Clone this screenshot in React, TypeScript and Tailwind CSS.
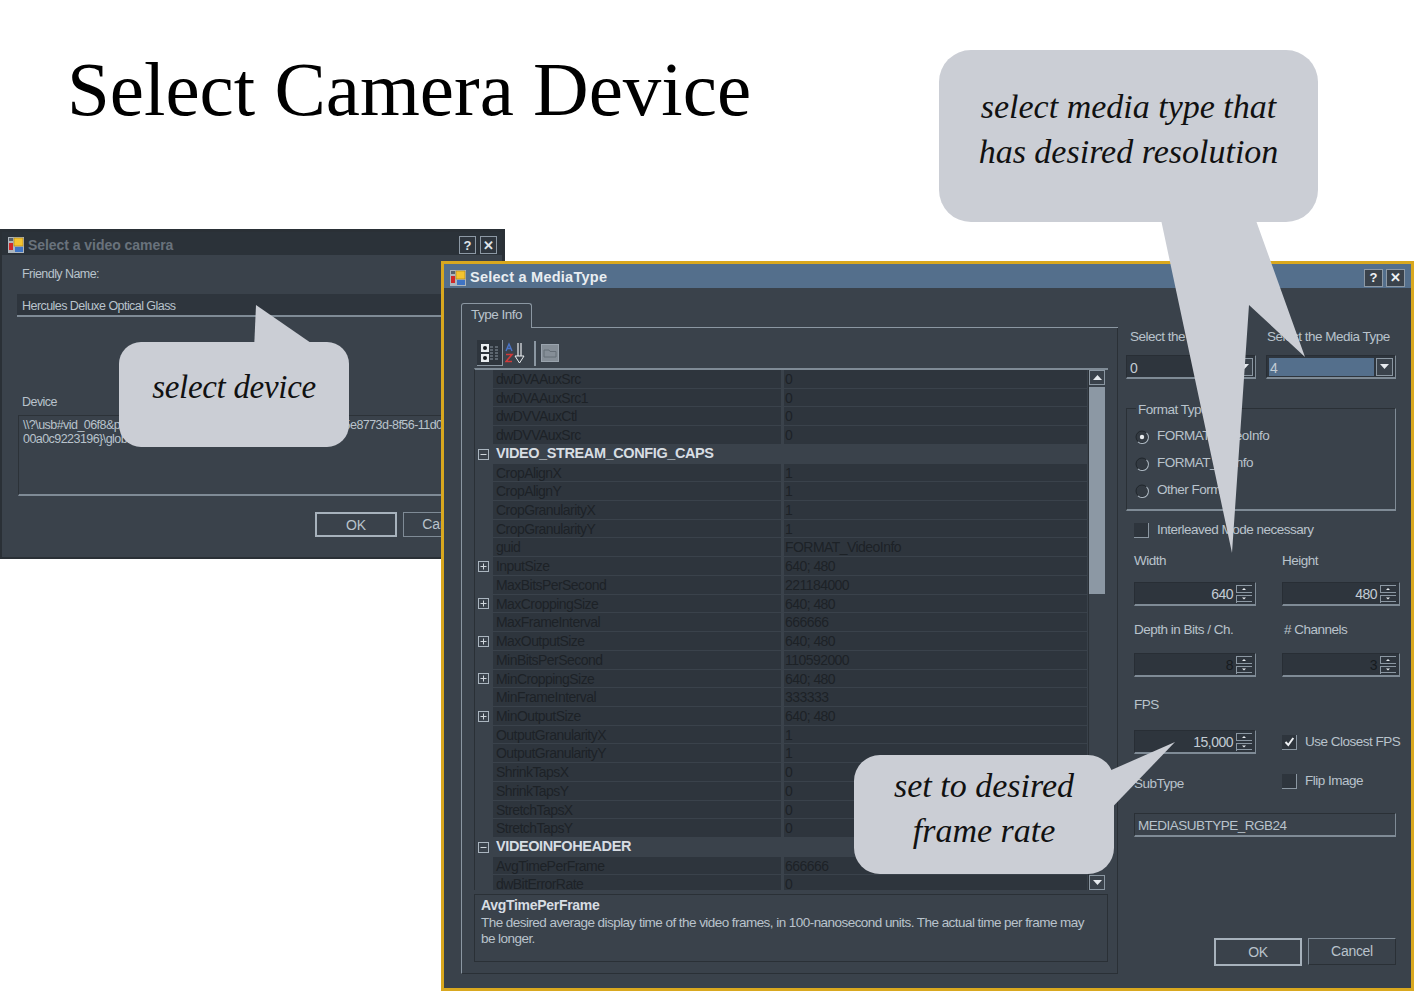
const rows: { name: string; value?: string; cat?: boolean; plus?: boolean; sel?: boolean }[] = [
  { name: "dwDVAAuxSrc", value: "0" },
  { name: "dwDVAAuxSrc1", value: "0" },
  { name: "dwDVVAuxCtl", value: "0" },
  { name: "dwDVVAuxSrc", value: "0" },
  { name: "VIDEO_STREAM_CONFIG_CAPS", cat: true },
  { name: "CropAlignX", value: "1" },
  { name: "CropAlignY", value: "1" },
  { name: "CropGranularityX", value: "1" },
  { name: "CropGranularityY", value: "1" },
  { name: "guid", value: "FORMAT_VideoInfo" },
  { name: "InputSize", value: "640; 480", plus: true },
  { name: "MaxBitsPerSecond", value: "221184000" },
  { name: "MaxCroppingSize", value: "640; 480", plus: true },
  { name: "MaxFrameInterval", value: "666666" },
  { name: "MaxOutputSize", value: "640; 480", plus: true },
  { name: "MinBitsPerSecond", value: "110592000" },
  { name: "MinCroppingSize", value: "640; 480", plus: true },
  { name: "MinFrameInterval", value: "333333" },
  { name: "MinOutputSize", value: "640; 480", plus: true },
  { name: "OutputGranularityX", value: "1" },
  { name: "OutputGranularityY", value: "1" },
  { name: "ShrinkTapsX", value: "0" },
  { name: "ShrinkTapsY", value: "0" },
  { name: "StretchTapsX", value: "0" },
  { name: "StretchTapsY", value: "0" },
  { name: "VIDEOINFOHEADER", cat: true },
  { name: "AvgTimePerFrame", value: "666666", sel: true },
  { name: "dwBitErrorRate", value: "0" },
];

function AppIcon() {
  return (
    <svg width="16" height="16" viewBox="0 0 16 16" className="shrink-0">
      <rect x="0" y="0" width="16" height="16" fill="#aeb6bd" />
      <rect x="6" y="1" width="9" height="8" fill="#f4c430" stroke="#a87d10" strokeWidth="0.6" />
      <rect x="1" y="6" width="4" height="7" fill="#d02828" />
      <rect x="7" y="10" width="8" height="5" fill="#3f74c4" />
      <rect x="1" y="1" width="4" height="3" fill="#59616b" />
    </svg>
  );
}

function TitleBtn({ children, dim }: { children: React.ReactNode; dim?: boolean }) {
  return (
    <div
      className={`h-[18px] flex items-center justify-center border border-[#8d99a5] text-[13px] font-bold leading-none ${
        dim ? "w-[17px] bg-[#2f363e] text-[#dfe4e9]" : "w-[19px] bg-[#3a424b] text-[#eef1f4]"
      }`}
    >
      {children}
    </div>
  );
}

function Spin({ value, dim, narrow }: { value: string; dim?: boolean; narrow?: boolean }) {
  return (
    <div
      className={`h-[24px] flex items-center bg-[#2e353d] border-t border-l border-[#282e35] border-b-2 border-r border-b-[#7f8b96] border-r-[#7f8b96] pr-[3px] ${
        narrow ? "w-[118px]" : "w-[122px]"
      }`}
    >
      <span className={`flex-1 text-right pt-[1px] pr-[3px] text-[14px] tracking-[-0.5px] ${dim ? "text-[#171b1f]" : "text-[#c3ccd4]"}`}>{value}</span>
      <svg width="16" height="18" viewBox="0 0 16 18" className="shrink-0">
        <path d="M0 .5h16M.5 0v8M0 7.5h16" stroke="#8b97a2" fill="none" />
        <path d="M0 10.5h16M.5 10v8M0 16.5h16" stroke="#8b97a2" fill="none" />
        <path d="M6 5h4L8 3z" fill="#e6eaee" />
        <path d="M6 12.5h4L8 14.5z" fill="#e6eaee" />
      </svg>
    </div>
  );
}

function Combo({ value, selected }: { value: string; selected?: boolean }) {
  return (
    <div className="w-[130px] h-[24px] flex items-center gap-[2px] bg-[#2e353d] border-t border-l border-[#282e35] border-b-2 border-r border-b-[#7f8b96] border-r-[#7f8b96] p-[2px]">
      <span className={`flex-1 h-[18px] pl-[1px] text-[14px] leading-[20px] text-[#c3ccd4] ${selected ? "bg-[#546f8c]" : ""}`}>{value}</span>
      <div className="w-[17px] h-[18px] flex items-center justify-center bg-[#3a424b] border border-[#8b97a2]">
        <svg width="9" height="5" viewBox="0 0 9 5"><path d="M0 0h9L4.5 5z" fill="#e6eaee" /></svg>
      </div>
    </div>
  );
}

function Radio({ label, on }: { label: string; on?: boolean }) {
  return (
    <div className="flex items-center gap-[8px] h-[27px] pl-[8px]">
      <svg width="14" height="14" viewBox="0 0 14 14" className="shrink-0">
        <circle cx="7" cy="7" r="6" fill="#333a42" stroke="#20262b" />
        <path d="M11.5 2.8A6 6 0 0 1 3 11.8" fill="none" stroke="#aab5bf" strokeWidth="1.1" />
        {on && <circle cx="7" cy="7" r="2.2" fill="#e8ecef" />}
      </svg>
      <span>{label}</span>
    </div>
  );
}

function Check({ on }: { on?: boolean }) {
  return (
    <div className="w-[15px] h-[15px] shrink-0 flex items-center justify-center bg-[#2e353d] border-b border-r border-[#8b97a2] border-t-[#252b31] border-l-[#252b31]">
      {on && (
        <svg width="11" height="10" viewBox="0 0 11 10"><path d="M1.5 5l2.8 3 5-7" fill="none" stroke="#eef1f4" strokeWidth="2" /></svg>
      )}
    </div>
  );
}

function PropertyRow({ row }: { row: (typeof rows)[number] }) {
  if (row.cat) {
    return (
      <div className="h-[18.72px] flex items-center bg-[#3a424b]">
        <div className="w-[18px] flex pl-[3px]">
          <svg width="11" height="11" viewBox="0 0 11 11"><rect x="0.5" y="0.5" width="10" height="10" fill="none" stroke="#aab5bf" /><path d="M2.5 5.5h6" stroke="#cfd6dc" /></svg>
        </div>
        <span className="pl-[3px] text-[14.5px] font-bold tracking-[-0.4px] text-[#d7dde3]">{row.name}</span>
      </div>
    );
  }
  return (
    <div className="h-[18.72px] flex items-stretch text-[#1d2227] text-[14px] tracking-[-0.55px] leading-[18px]">
      <div className="w-[18px] flex items-center pl-[3px]">
        {row.plus && (
          <svg width="11" height="11" viewBox="0 0 11 11"><rect x="0.5" y="0.5" width="10" height="10" fill="none" stroke="#aab5bf" /><path d="M2.5 5.5h6M5.5 2.5v6" stroke="#cfd6dc" /></svg>
        )}
      </div>
      <div className="w-[288px] pl-[3px] bg-[#2e353d] border-b border-[#3a424b] overflow-hidden whitespace-nowrap">{row.name}</div>
      <div className="flex-1 ml-[3px] pl-[1px] bg-[#2e353d] border-b border-[#3a424b] whitespace-nowrap">{row.value}</div>
    </div>
  );
}

function VideoCameraWindow() {
  return (
    <div className="absolute left-0 top-[229px] w-[505px] h-[330px] bg-[#3a424b] border-[3px] border-[#2a3036] border-l-[2px] border-b-[2px] text-[#b9c3cc] text-[12.5px] overflow-hidden">
      <div className="h-[23px] flex items-center gap-[4px] pt-[3px] pl-[6px] pr-[5px] bg-[#2b3239]">
        <AppIcon />
        <span className="flex-1 font-bold text-[14px] tracking-[-0.05px] text-[#69727c]">Select a video camera</span>
        <div className="flex gap-[4px]">
          <TitleBtn dim>?</TitleBtn>
          <TitleBtn dim>✕</TitleBtn>
        </div>
      </div>
      <div className="pl-[20px] pt-[10px] tracking-[-0.55px]">Friendly Name:</div>
      <div className="ml-[15px] mt-[10px] h-[23px] pl-[5px] leading-[25px] bg-[#2e353d] border-b-2 border-[#7f8b96] tracking-[-0.55px]">Hercules Deluxe Optical Glass</div>
      <div className="pl-[20px] mt-[76px] tracking-[-0.55px]">Device</div>
      <div className="ml-[16px] mt-[3px] h-[81px] pl-[4px] pt-[2px] bg-[#3a424b] border-t border-l border-[#2c3238] border-b-2 border-b-[#7f8b96] leading-[14px] tracking-[-0.55px] whitespace-nowrap">
        <div>{"\\\\?\\usb#vid_06f8&pid_3004&mi_00#7&12c8bf9c0&0&00000#{65e8773d-8f56-11d0-a3b9-"}</div>
        <div>{"00a0c9223196}\\global"}</div>
      </div>
      <div className="flex gap-[6px] pl-[313px] mt-[16px] whitespace-nowrap text-[14px]">
        <div className="w-[82px] h-[25px] text-center leading-[22px] border-2 border-[#a7b2bc] bg-[#3a424b]">OK</div>
        <div className="w-[82px] h-[25px] text-center leading-[22px] border border-[#7f8b96]">Cancel</div>
      </div>
    </div>
  );
}

function MediaTypeWindow() {
  return (
    <div className="absolute left-[441px] top-[261px] w-[973px] h-[730px] bg-[#3a424b] border-[3px] border-[#d9a81f] text-[#b9c3cc] text-[14px] overflow-hidden">
      <div className="h-[24px] flex items-center gap-[4px] pt-[3px] pl-[6px] pr-[6px] bg-[#546f8c]">
        <AppIcon />
        <span className="flex-1 font-bold text-[14.5px] tracking-[0.25px] text-[#e9edf1]">Select a MediaType</span>
        <div className="flex gap-[3px]">
          <TitleBtn>?</TitleBtn>
          <TitleBtn>✕</TitleBtn>
        </div>
      </div>
      <div className="flex">
        {/* tab area */}
        <div className="ml-[17px] mt-[15px] w-[657px]">
          <div className="flex items-end h-[25px]">
            <div className="w-[71px] h-[25px] pl-[9px] leading-[22px] text-[13.5px] tracking-[-0.5px] border-t border-l border-r border-[#8b97a2] rounded-t-[3px]">Type Info</div>
            <div className="flex-1 border-b border-[#8b97a2]" />
          </div>
          <div className="h-[646px] border-l border-r border-b border-l-[#8b97a2] border-r-[#2a3036] border-b-[#2a3036] pl-[12px] pr-[9px]">
            <div className="h-[40px] flex items-end pb-[2px] pl-[3px] gap-[2px]">
              <div className="w-[26px] h-[26px] flex items-center justify-center bg-[#2e353d] border-r border-b border-[#8b97a2]">
                <svg width="20" height="20" viewBox="0 0 20 20">
                  <rect x="1" y="1" width="8" height="8" fill="#e8ecef" /><circle cx="5" cy="5" r="2" fill="#14181c" />
                  <rect x="1" y="11" width="8" height="8" fill="#e8ecef" /><circle cx="5" cy="15" r="2" fill="#14181c" />
                  <path d="M10 4h3M15 4h3M10 7h3M15 7h3M10 10h3M15 10h3M10 13h3M15 13h3M10 16h3M15 16h3" stroke="#8b97a2" />
                </svg>
              </div>
              <svg width="22" height="22" viewBox="0 0 22 22" className="mb-[2px]">
                <path d="M1 9l3-7 3 7M2.2 6.5h3.6" fill="none" stroke="#4a74c8" strokeWidth="1.4" />
                <path d="M1 12.5h6l-6 7h6" fill="none" stroke="#d03a3a" strokeWidth="1.6" />
                <path d="M13 1v14M16 1v14" stroke="#e8ecef" strokeWidth="1.2" />
                <path d="M10 14l4.5 7 4.5-7z" fill="#3a424b" stroke="#e8ecef" />
              </svg>
              <div className="w-[2px] h-[25px] ml-[5px] bg-[#8b97a2]" />
              <svg width="18" height="18" viewBox="0 0 18 18" className="ml-[3px] mb-[4px]">
                <rect x="0.5" y="0.5" width="17" height="17" fill="#858e97" stroke="#9aa4ae" />
                <path d="M3 6h5l1 1.5h6V13H3z" fill="none" stroke="#656e77" />
              </svg>
            </div>
            <div className="relative h-[522px] overflow-hidden border-t-2 border-l border-[#7f8b96] border-l-[#2a3036] pr-[21px]">
              {rows.map((r) => (
                <PropertyRow key={r.name} row={r} />
              ))}
              <div className="absolute right-[3px] top-0 bottom-0 w-[17px] flex flex-col items-center bg-[#3a424b] border-l border-[#2a3036]">
                <div className="w-[16px] h-[15px] flex items-center justify-center bg-[#3a424b] border border-[#8b97a2]">
                  <svg width="9" height="5" viewBox="0 0 9 5"><path d="M0 5h9L4.5 0z" fill="#e6eaee" /></svg>
                </div>
                <div className="w-[16px] h-[207px] mt-[2px] bg-[#8c98a4]" />
                <div className="flex-1" />
                <div className="w-[16px] h-[15px] flex items-center justify-center bg-[#3a424b] border border-[#8b97a2]">
                  <svg width="9" height="5" viewBox="0 0 9 5"><path d="M0 0h9L4.5 5z" fill="#e6eaee" /></svg>
                </div>
              </div>
            </div>
            <div className="mt-[4px] h-[68px] border border-[#2a3036] pl-[6px] pr-[14px] pt-[2px] leading-[16px] w-[634px]">
              <div className="font-bold text-[14px] tracking-[-0.3px] text-[#d7dde3]">AvgTimePerFrame</div>
              <div className="pt-[2px] text-[13.5px] tracking-[-0.55px]">The desired average display time of the video frames, in 100-nanosecond units. The actual time per frame may be longer.</div>
            </div>
          </div>
        </div>

        {/* right side controls */}
        <div className="ml-[8px] mt-[40px] flex-1 pr-[12px] text-[13.5px] tracking-[-0.5px]">
          <div className="flex gap-[9px]">
            <div className="w-[131px] leading-[18px]">
              <div className="pl-[4px]">Select the Stream</div>
              <div className="mt-[9px]"><Combo value="0" /></div>
            </div>
            <div className="leading-[18px]">
              <div className="pl-[1px]">Select the Media Type</div>
              <div className="mt-[9px]"><Combo value="4" selected /></div>
            </div>
          </div>

          <div className="relative mt-[29px] w-[270px] h-[103px] border border-[#2a3036] border-b-2 border-b-[#7f8b96] border-r-[#7f8b96] pt-[14px]">
            <div className="absolute -top-[7px] left-[9px] px-[2px] bg-[#3a424b] leading-[16px]">Format Type</div>
            <Radio label="FORMAT_VideoInfo" on />
            <Radio label="FORMAT_DvInfo" />
            <Radio label="Other Format" />
          </div>

          <div className="flex items-center gap-[8px] mt-[9px] ml-[8px] h-[20px]">
            <Check />
            <span>Interleaved Mode necessary</span>
          </div>

          <div className="ml-[8px] mt-[12px] grid grid-cols-[148px_118px]">
            <div className="h-[20px] leading-[18px]">Width</div>
            <div className="h-[20px] leading-[18px]">Height</div>
            <div className="mt-[10px]"><Spin value="640" /></div>
            <div className="mt-[10px]"><Spin value="480" narrow /></div>
            <div className="mt-[14px] h-[20px] leading-[20px]">Depth in Bits / Ch.</div>
            <div className="mt-[14px] h-[20px] leading-[20px] pl-[2px]"># Channels</div>
            <div className="mt-[13px]"><Spin value="8" dim /></div>
            <div className="mt-[13px]"><Spin value="3" dim narrow /></div>
            <div className="mt-[18px] h-[20px] leading-[20px] col-span-2">FPS</div>
            <div className="mt-[15px]"><Spin value="15,000" /></div>
            <div className="mt-[15px] flex items-center gap-[8px] whitespace-nowrap">
              <Check on />
              <span>Use Closest FPS</span>
            </div>
            <div className="mt-[20px] h-[20px] leading-[20px]">SubType</div>
            <div className="mt-[17px] flex items-center gap-[8px] h-[20px]">
              <Check />
              <span>Flip Image</span>
            </div>
          </div>
          <div className="ml-[8px] mt-[19px] w-[262px] h-[24px] pl-[3px] leading-[23px] border-t border-l border-[#2a3036] border-b-2 border-r border-b-[#7f8b96] border-r-[#7f8b96]">
            MEDIASUBTYPE_RGB24
          </div>
          <div className="flex gap-[6px] mt-[101px] ml-[88px] text-[14px] tracking-[-0.3px]">
            <div className="w-[88px] h-[28px] text-center leading-[24px] border-2 border-[#a7b2bc]">OK</div>
            <div className="w-[88px] h-[27px] text-center leading-[25px] border border-t-[#7f8b96] border-l-[#7f8b96] border-b-[#2a3036] border-r-[#2a3036]">Cancel</div>
          </div>
        </div>
      </div>
    </div>
  );
}

function Callout({ className, lines }: { className: string; lines: string[] }) {
  return (
    <div className={`absolute flex flex-col items-center justify-center pb-[14px] bg-[#cbced5] text-[#111] italic [font-family:'Liberation_Serif',serif] ${className}`}>
      {lines.map((l) => (
        <div key={l}>{l}</div>
      ))}
    </div>
  );
}

export default function App() {
  return (
    <div className="relative w-[1414px] h-[991px] overflow-hidden bg-white [font-family:'Liberation_Sans',sans-serif]">
      <h1 className="absolute left-[67px] top-[41px] text-[77px] leading-[96px] text-black whitespace-nowrap [font-family:'Liberation_Serif',serif]">
        Select Camera Device
      </h1>

      <VideoCameraWindow />
      <MediaTypeWindow />

      {/* speech bubble tails */}
      <svg className="absolute left-0 top-0 pointer-events-none" width="1414" height="991" viewBox="0 0 1414 991">
        <polygon points="1160,215 1232,553 1249,305 1305,357 1254,215" fill="#cbced5" />
        <polygon points="254,350 256,305 311,343 311,350" fill="#cbced5" />
        <polygon points="1100,775 1175,742 1100,820" fill="#cbced5" />
      </svg>

      <Callout
        className="left-[939px] top-[50px] w-[379px] h-[172px] rounded-[32px] text-[34px] leading-[45px]"
        lines={["select media type that", "has desired resolution"]}
      />
      <Callout
        className="left-[119px] top-[342px] w-[230px] h-[105px] rounded-[22px] text-[33px] leading-[45px] tracking-[-0.3px]"
        lines={["select device"]}
      />
      <Callout
        className="left-[854px] top-[755px] w-[260px] h-[119px] rounded-[26px] text-[34px] leading-[45px]"
        lines={["set to desired", "frame rate"]}
      />
    </div>
  );
}
